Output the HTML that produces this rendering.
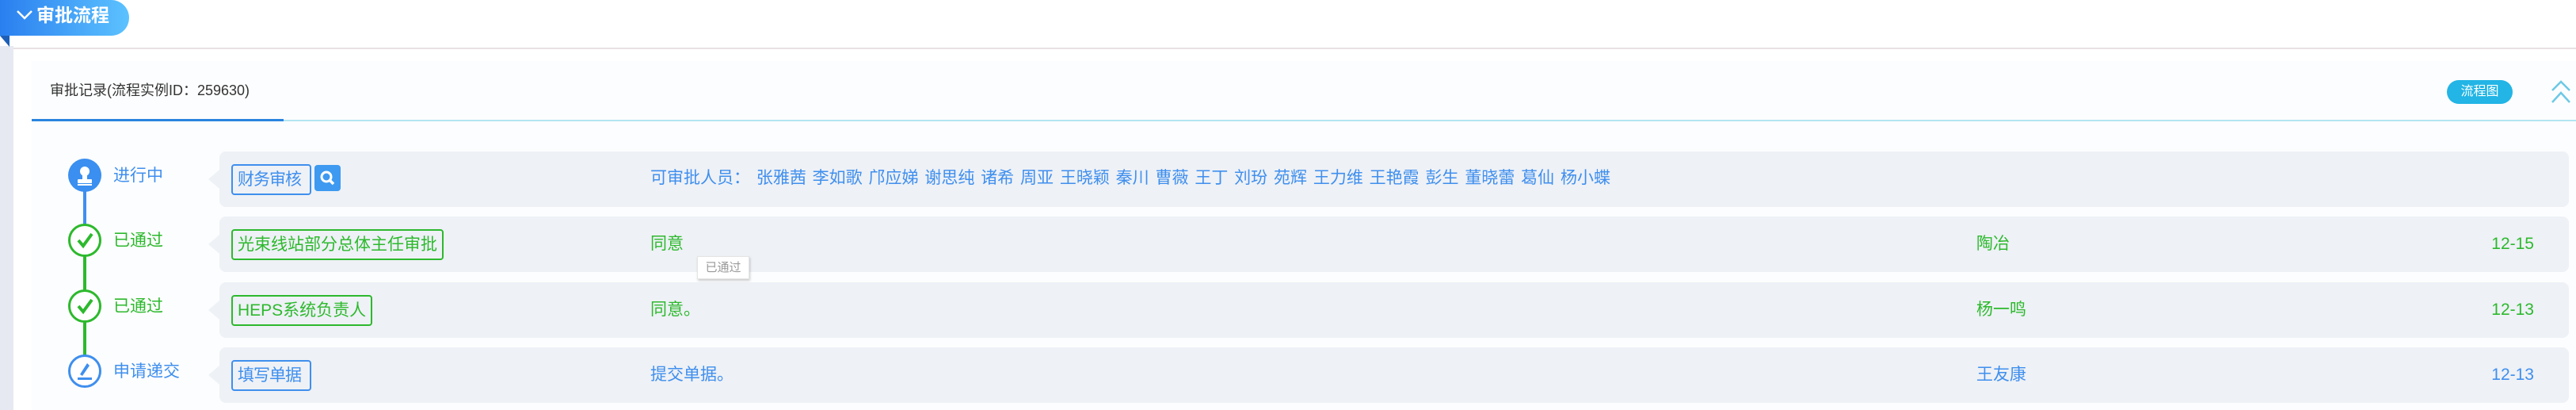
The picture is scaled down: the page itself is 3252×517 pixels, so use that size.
<!DOCTYPE html>
<html><head><meta charset="utf-8"><style>
*{margin:0;padding:0;box-sizing:border-box}
body{width:3252px;height:517px;position:relative;background:#fff;font-family:"Liberation Sans","Noto Sans CJK SC",sans-serif;overflow:hidden}
.abs{position:absolute}
.tab{left:0;top:0;width:163px;height:45px;background:linear-gradient(90deg,#2a7fef,#5cc2ff);border-radius:0 24px 24px 0;color:#fff;font-weight:bold;font-size:23px;line-height:38px;padding-left:46px}
.fold{left:0;top:45px;width:0;height:0;border-top:14px solid #1d5fb8;border-left:12px solid transparent}
.row{left:277px;width:2966px;height:70px;background:#eef1f6;border-radius:8px}
.ptr{left:263px;width:0;height:0;border-top:12px solid transparent;border-bottom:12px solid transparent;border-right:14px solid #eef1f6}
.circ{left:86px;width:42px;height:42px;border-radius:50%;background:#fff}
.lbl{left:143px;font-size:21px;line-height:24px}
.tag{left:292px;height:39px;border:2px solid;border-radius:4px;font-size:21px;line-height:35px;padding:0 6px}
.txt{left:821px;font-size:21px;line-height:24px}
.name{left:2495px;font-size:21px;line-height:24px}
.date{right:53px;font-size:21px;line-height:24px}
.b{color:#3f8fee}.g{color:#2db92d}
</style></head><body>
<div class="abs" style="left:0;top:58px;width:17px;height:459px;background:#e6e9f1"></div>
<div class="abs" style="left:17px;top:60px;width:3235px;height:2px;background:#e9e1e4"></div>
<div class="abs" style="left:40px;top:77px;width:3212px;height:440px;background:#fcfdfe"></div>
<div class="abs fold"></div>
<div class="abs tab">审批流程</div>
<svg class="abs" style="left:20px;top:12px" width="22" height="14"><path d="M2 2 L11 11 L20 2" stroke="#fff" stroke-width="2.5" fill="none"/></svg>

<div class="abs" style="left:63px;top:102px;font-size:18px;line-height:24px;color:#333">审批记录(流程实例ID：259630)</div>
<div class="abs" style="left:40px;top:151px;width:3212px;height:2px;background:#b3e5f2"></div>
<div class="abs" style="left:40px;top:150px;width:318px;height:3px;background:#2a85e0"></div>
<div class="abs" style="left:3089px;top:101px;width:83px;height:30px;border-radius:15px;background:#22b5e5;color:#fff;font-size:16px;line-height:30px;text-align:center">流程图</div>
<svg class="abs" style="left:3220px;top:101px" width="26" height="30"><path d="M2 13 L13 2 L24 13 M2 28 L13 16 L24 28" stroke="#6cc9e6" stroke-width="2.5" fill="none"/></svg>

<div class="abs" style="left:105px;top:240px;width:4px;height:44px;background:#3f8fee"></div>
<div class="abs" style="left:105px;top:322px;width:4px;height:48px;background:#2db92d"></div>
<div class="abs" style="left:105px;top:405px;width:4px;height:48px;background:#2db92d"></div>

<div class="abs row" style="top:191px"></div><div class="abs ptr" style="top:214px"></div>
<div class="abs row" style="top:273px"></div><div class="abs ptr" style="top:296px"></div>
<div class="abs row" style="top:356px"></div><div class="abs ptr" style="top:379px"></div>
<div class="abs row" style="top:438px"></div><div class="abs ptr" style="top:461px"></div>

<div class="abs circ" style="top:200px;background:#3a8ff0"><svg width="42" height="42"><circle cx="21" cy="16" r="6" fill="#fff"/><rect x="18" y="20" width="6" height="6" fill="#fff"/><rect x="12" y="26" width="18" height="5" rx="1" fill="#fff"/><rect x="12" y="32" width="18" height="2" fill="#fff"/></svg></div>
<div class="abs circ" style="top:282px;border:3px solid #2db92d"><svg width="36" height="36"><path d="M10 18 L16 25 L27 10" stroke="#2db92d" stroke-width="4" fill="none"/></svg></div>
<div class="abs circ" style="top:365px;border:3px solid #2db92d"><svg width="36" height="36"><path d="M10 18 L16 25 L27 10" stroke="#2db92d" stroke-width="4" fill="none"/></svg></div>
<div class="abs circ" style="top:447px;border:3px solid #3f8fee"><svg width="36" height="36"><path d="M12 22 L21 8 L24 11 L15 24 Z" fill="#3f8fee"/><rect x="9" y="26" width="18" height="3" fill="#3f8fee"/></svg></div>

<div class="abs lbl b" style="top:210px">进行中</div>
<div class="abs lbl g" style="top:292px">已通过</div>
<div class="abs lbl g" style="top:375px">已通过</div>
<div class="abs lbl b" style="top:457px">申请递交</div>

<div class="abs tag b" style="top:207px;width:101px;border-color:#3f8fee;letter-spacing:-1px">财务审核</div>
<div class="abs" style="left:397px;top:208px;width:33px;height:33px;border-radius:4px;background:#3d9af0"><svg width="33" height="33"><circle cx="15" cy="15" r="6" stroke="#fff" stroke-width="3" fill="none"/><path d="M19 19 L24 24" stroke="#fff" stroke-width="3.5"/></svg></div>
<div class="abs tag g" style="top:289px;border-color:#2db92d">光束线站部分总体主任审批</div>
<div class="abs tag g" style="top:372px;border-color:#2db92d">HEPS系统负责人</div>
<div class="abs tag b" style="top:454px;width:101px;border-color:#3f8fee;letter-spacing:-1px">填写单据</div>

<div class="abs txt b" style="top:213px;word-spacing:2px">可审批人员：&nbsp;张雅茜 李如歌 邝应娣 谢思纯 诸希 周亚 王晓颖 秦川 曹薇 王丁 刘玢 苑辉 王力维 王艳霞 彭生 董晓蕾 葛仙 杨小蝶</div>
<div class="abs txt g" style="top:296px">同意</div>
<div class="abs" style="left:880px;top:323px;width:66px;height:29px;background:#fff;border:1px solid #e4e4e4;box-shadow:1px 2px 3px rgba(0,0,0,.2);color:#999;font-size:15px;line-height:27px;text-align:center">已通过</div>
<div class="abs txt g" style="top:379px">同意。</div>
<div class="abs txt b" style="top:461px">提交单据。</div>

<div class="abs name g" style="top:296px">陶冶</div>
<div class="abs name g" style="top:379px">杨一鸣</div>
<div class="abs name b" style="top:461px">王友康</div>
<div class="abs date g" style="top:296px">12-15</div>
<div class="abs date g" style="top:379px">12-13</div>
<div class="abs date b" style="top:461px">12-13</div>
</body></html>
